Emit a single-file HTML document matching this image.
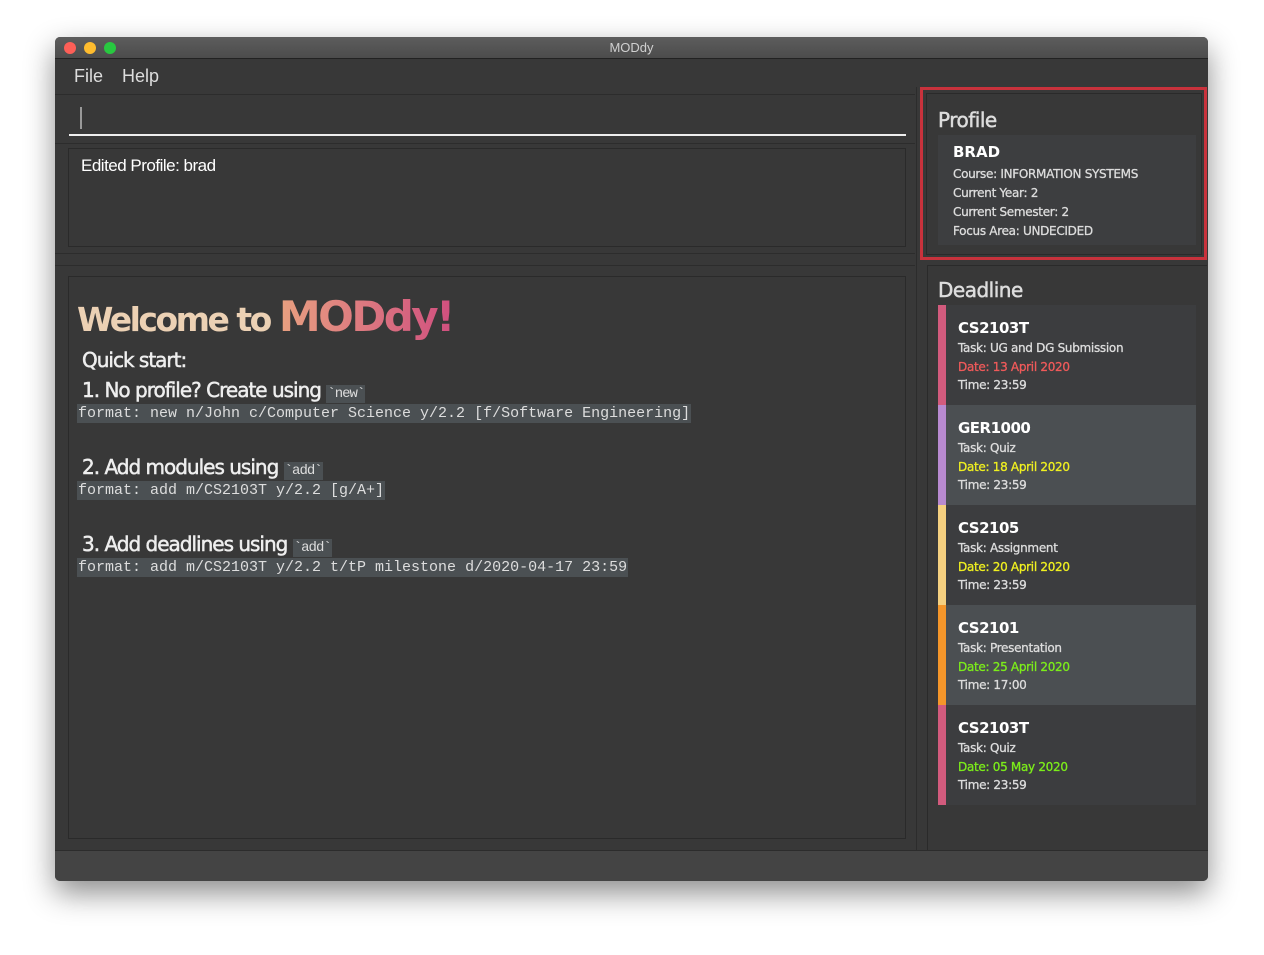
<!DOCTYPE html>
<html><head><style>
*{margin:0;padding:0;box-sizing:border-box}
body{width:1264px;height:955px;background:#fff;position:relative;overflow:hidden;font-family:"Liberation Sans",sans-serif}
.abs{position:absolute}
.win{left:55px;top:37px;width:1153px;height:844px;background:#383838;border-radius:5px;box-shadow:0 12px 30px rgba(0,0,0,.45);overflow:hidden}
.title{left:0;top:0;width:1153px;height:22px;background:linear-gradient(#5d5d5d,#4c4c4c);border-bottom:1px solid #222;color:#d0d0d0;font-size:13px;text-align:center;line-height:22px}
.dot{top:5px;width:12px;height:12px;border-radius:50%}
.t{color:#fff;font-family:"DejaVu Sans","Liberation Sans",sans-serif}
.h{-webkit-text-stroke:0.5px currentColor}
.code{font-family:"Liberation Mono",monospace;background:#4b5053;color:#ddd;font-size:15px;padding:1px 1px;-webkit-text-stroke:0}
.card{left:883px;width:258px;height:100px}
.bar{left:0;top:0;width:8px;height:100px}
.card .n{position:absolute;left:20px;top:14px;font-weight:bold;font-size:15px;color:#fff;font-family:"DejaVu Sans",sans-serif;letter-spacing:-.5px}
.card .l{position:absolute;left:20px;font-size:12px;color:#ddd;font-family:"DejaVu Sans",sans-serif;letter-spacing:-.3px;-webkit-text-stroke:0.3px currentColor}
</style></head><body>
<div class="abs win">
 <div class="abs title">MODdy</div>
 <div class="abs dot" style="left:9px;background:#fd5f57"></div>
 <div class="abs dot" style="left:29px;background:#febc2e"></div>
 <div class="abs dot" style="left:49px;background:#28c840"></div>
 <div class="abs t" style="left:19px;top:29px;font-size:18px;color:#ddd;font-family:'Liberation Sans',sans-serif">File</div>
 <div class="abs t" style="left:67px;top:29px;font-size:18px;color:#ddd;font-family:'Liberation Sans',sans-serif">Help</div>
 <div class="abs" style="left:0;top:57px;width:860px;height:1px;background:#2c2c2c"></div>
 <div class="abs" style="left:25px;top:70px;width:2px;height:22px;background:#999"></div>
 <div class="abs" style="left:14px;top:97px;width:837px;height:2px;background:#eee"></div>
 <div class="abs" style="left:0;top:106px;width:860px;height:1px;background:#2c2c2c"></div>
 <div class="abs" style="left:13px;top:111px;width:838px;height:99px;border:1px solid #2a2a2a"></div>
 <div class="abs" style="left:26px;top:119px;font-size:17px;color:#fff;letter-spacing:-.5px">Edited Profile: brad</div>
 <div class="abs" style="left:0;top:216px;width:860px;height:1px;background:#2c2c2c"></div>
 <div class="abs" style="left:0;top:228px;width:860px;height:1px;background:#2c2c2c"></div>
 <div class="abs" style="left:13px;top:239px;width:838px;height:563px;border:1px solid #2a2a2a"></div>
 <div class="abs" style="left:22px;top:255px;font-size:33px;font-weight:bold;font-family:'DejaVu Sans',sans-serif;letter-spacing:-2.5px;color:#ecd1b4">Welcome to <span style="font-size:42px;background:linear-gradient(90deg,#e8a080,#d04f7f);-webkit-background-clip:text;color:transparent">MODdy!</span></div>
 <div class="abs t h" style="left:27px;top:311px;font-size:20px;letter-spacing:-1px;color:#eee">Quick start:</div>
 <div class="abs t h" style="left:27px;top:341px;font-size:20px;letter-spacing:-1px;color:#eee">1. No profile? Create using <span class="code" style="font-size:14px">`new`</span></div>
 <div class="abs" style="left:22px;top:367px"><span class="code">format: new n/John c/Computer Science y/2.2 [f/Software Engineering]</span></div>
 <div class="abs t h" style="left:27px;top:418px;font-size:20px;letter-spacing:-1px;color:#eee">2. Add modules using <span class="code" style="font-size:14px">`add`</span></div>
 <div class="abs" style="left:22px;top:444px"><span class="code">format: add m/CS2103T y/2.2 [g/A+]</span></div>
 <div class="abs t h" style="left:27px;top:495px;font-size:20px;letter-spacing:-1px;color:#eee">3. Add deadlines using <span class="code" style="font-size:14px">`add`</span></div>
 <div class="abs" style="left:22px;top:521px"><span class="code">format: add m/CS2103T y/2.2 t/tP milestone d/2020-04-17 23:59</span></div>
 <div class="abs" style="left:861px;top:50px;width:1px;height:764px;background:#2c2c2c"></div>
 <div class="abs" style="left:865px;top:50px;width:287px;height:173px;border:3px solid #c8323c"></div>
 <div class="abs" style="left:871px;top:56px;width:276px;height:162px;border:1px solid #2a2a2a"></div>
 <div class="abs t h" style="left:883px;top:71px;font-size:20px;color:#ddd;letter-spacing:-.5px">Profile</div>
 <div class="abs" style="left:883px;top:98px;width:258px;height:110px;background:#3d3e40"></div>
 <div class="abs t" style="left:898px;top:106px;font-size:15px;font-weight:bold">BRAD</div>
 <div class="abs t" style="left:898px;top:128px;font-size:12px;color:#ddd;line-height:19px;letter-spacing:-.3px;-webkit-text-stroke:0.3px #ddd">Course: INFORMATION SYSTEMS<br>Current Year: 2<br>Current Semester: 2<br>Focus Area: UNDECIDED</div>
 <div class="abs" style="left:872px;top:228px;width:280px;height:586px;border:1px solid #2a2a2a;border-right:none"></div>
 <div class="abs t h" style="left:883px;top:241px;font-size:20px;color:#ddd;letter-spacing:-.5px">Deadline</div>
 <div class="abs card" style="top:268px;background:#3c3d3f"><div class="abs bar" style="background:#d25b7d"></div><div class="n">CS2103T</div><div class="l" style="top:36px">Task: UG and DG Submission</div><div class="l" style="top:55px;color:#f05a5a">Date: 13 April 2020</div><div class="l" style="top:73px">Time: 23:59</div></div>
 <div class="abs card" style="top:368px;background:#4b4f52"><div class="abs bar" style="background:#b88ad0"></div><div class="n">GER1000</div><div class="l" style="top:36px">Task: Quiz</div><div class="l" style="top:55px;color:#f0f020">Date: 18 April 2020</div><div class="l" style="top:73px">Time: 23:59</div></div>
 <div class="abs card" style="top:468px;background:#3c3d3f"><div class="abs bar" style="background:#f5d080"></div><div class="n">CS2105</div><div class="l" style="top:36px">Task: Assignment</div><div class="l" style="top:55px;color:#f0f020">Date: 20 April 2020</div><div class="l" style="top:73px">Time: 23:59</div></div>
 <div class="abs card" style="top:568px;background:#4b4f52"><div class="abs bar" style="background:#f5962a"></div><div class="n">CS2101</div><div class="l" style="top:36px">Task: Presentation</div><div class="l" style="top:55px;color:#7ced1a">Date: 25 April 2020</div><div class="l" style="top:73px">Time: 17:00</div></div>
 <div class="abs card" style="top:668px;background:#3c3d3f"><div class="abs bar" style="background:#d25b7d"></div><div class="n">CS2103T</div><div class="l" style="top:36px">Task: Quiz</div><div class="l" style="top:55px;color:#7ced1a">Date: 05 May 2020</div><div class="l" style="top:73px">Time: 23:59</div></div>
 <div class="abs" style="left:0;top:813px;width:1153px;height:31px;background:#444;border-top:1px solid #2c2c2c"></div>
</div>
</body></html>
